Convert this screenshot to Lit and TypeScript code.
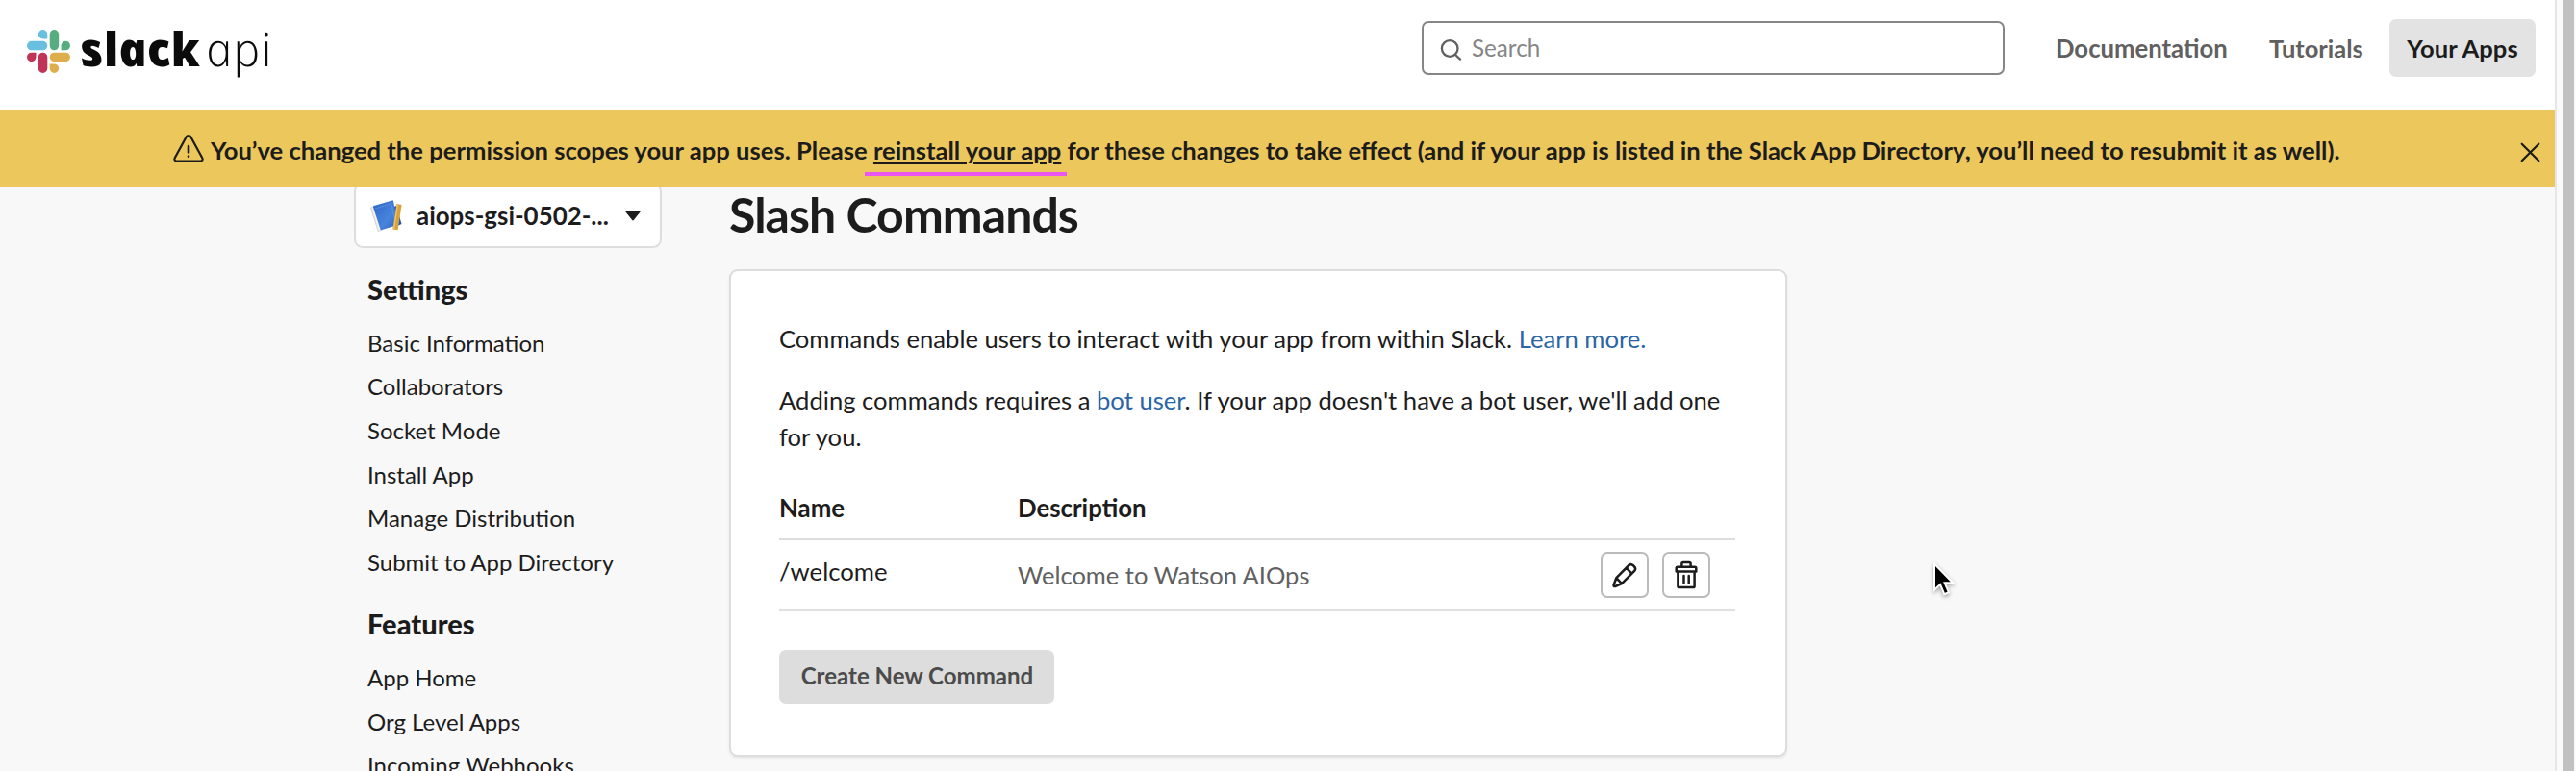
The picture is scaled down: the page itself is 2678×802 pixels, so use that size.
import { LitElement, html, css } from "lit";
import { customElement } from "lit/decorators.js";

const SECTIONS = [
  {
    title: "Settings",
    items: ["Basic Information", "Collaborators", "Socket Mode", "Install App", "Manage Distribution", "Submit to App Directory"],
  },
  { title: "Features", items: ["App Home", "Org Level Apps", "Incoming Webhooks"] },
];

@customElement("api-header")
class ApiHeader extends LitElement {
  static styles = css`
    :host { display: flex; align-items: center; height: 100px; padding: 0 20px 14px 28px; background: #fff; }
    .mark { width: 45px; height: 45px; margin-top: 7px; flex: none; }
    .word { display: flex; margin-left: 13px; width: 210px; font: italic 800 48.7px/100px "Open Sans", sans-serif; color: #0b0b0b; white-space: nowrap; }
    .slack { transform: skewX(12deg); transform-origin: 0 69px; width: 131px; letter-spacing: 0; }
    .api { transform: skewX(12deg); transform-origin: 0 69px; font-weight: 300; letter-spacing: 1.2px; }
    .search { box-sizing: border-box; display: flex; align-items: center; width: 606px; height: 56px; margin-left: auto; border: 2px solid #868686; border-radius: 7px; padding: 0 17px; gap: 10px; color: #868686; font-size: 24.2px; }
    .search svg { margin-top: 4px; }
    .search span { padding-bottom: 2px; }
    nav { display: flex; align-items: center; margin-left: 53px; font-weight: 700; color: #616061; white-space: nowrap; }
    .doc { font-size: 25.7px; width: 222px; }
    .tut { font-size: 25.5px; width: 125px; }
    .apps { box-sizing: border-box; width: 152px; height: 60px; line-height: 60px; text-align: center; border-radius: 7px; background: #e3e3e3; color: #1d1c1d; font-size: 25.6px; }
  `;
  render() {
    return html`
      <svg class="mark" viewBox="0 0 122.8 122.8">
        <path fill="#c03458" d="M25.8 77.6a12.9 12.9 0 1 1-12.9-12.9h12.9zM32.3 77.6a12.9 12.9 0 0 1 25.8 0v32.3a12.9 12.9 0 0 1-25.8 0z" />
        <path fill="#68bfe0" d="M45.2 25.8a12.9 12.9 0 1 1 12.9-12.9v12.9zM45.2 32.3a12.9 12.9 0 0 1 0 25.8H12.9a12.9 12.9 0 0 1 0-25.8z" />
        <path fill="#57ad7f" d="M97 45.2a12.9 12.9 0 1 1 12.9 12.9H97zM90.5 45.2a12.9 12.9 0 0 1-25.8 0V12.9a12.9 12.9 0 0 1 25.8 0z" />
        <path fill="#dfae4c" d="M77.6 97a12.9 12.9 0 1 1-12.9 12.9V97zM77.6 90.5a12.9 12.9 0 0 1 0-25.8h32.3a12.9 12.9 0 0 1 0 25.8z" />
      </svg>
      <div class="word"><span class="slack">slack</span><span class="api">api</span></div>
      <div class="search">
        <svg width="23" height="22" viewBox="0 0 23 22" fill="none" stroke="#616061" stroke-width="2.3" stroke-linecap="round">
          <circle cx="10.2" cy="9.5" r="8.3" /><path d="M16 16l5 4.6" />
        </svg>
        <span>Search</span>
      </div>
      <nav><span class="doc">Documentation</span><span class="tut">Tutorials</span><span class="apps">Your Apps</span></nav>
    `;
  }
}

@customElement("scope-banner")
class ScopeBanner extends LitElement {
  static styles = css`
    :host { display: flex; box-sizing: border-box; align-items: center; height: 80px; padding: 4px 15px 0 179px; background: #ecc75c; color: #1d1c1d; font-size: 25.6px; font-weight: 700; white-space: nowrap; }
    .warn { margin: 0 6px 2px 0; }
    .link { position: relative; text-decoration: underline; text-decoration-thickness: 2px; text-underline-offset: 3px; }
    .mark { position: absolute; left: -9px; right: -6px; top: 38px; height: 4px; background: #ea56f0; }
    .close { margin: 5px 0 0 auto; }
  `;
  render() {
    return html`
      <svg class="warn" width="34" height="32" viewBox="0 0 34 32" fill="none" stroke="#1d1c1d" stroke-width="2.2" stroke-linecap="round" stroke-linejoin="round">
        <path d="M14.6 3.4a2.8 2.8 0 0 1 4.8 0L31.4 25.5a2 2 0 0 1-1.8 3H4.4a2 2 0 0 1-1.8-3z" />
        <path stroke-width="2.6" d="M17 13v6.5M17 23.6v.2" />
      </svg>
      <div>You’ve changed the permission scopes your app uses. Please <span class="link">reinstall your app<i class="mark"></i></span> for these changes to take effect (and if your app is listed in the Slack App Directory, you’ll need to resubmit it as well).</div>
      <svg class="close" width="21" height="21" viewBox="0 0 21 21" stroke="#1d1c1d" stroke-width="2.2" stroke-linecap="round"><path d="M1.7 1.7l17.6 17.6M19.3 1.7L1.7 19.3" /></svg>
    `;
  }
}

@customElement("app-sidebar")
class AppSidebar extends LitElement {
  static styles = css`
    :host { display: block; width: 320px; color: #1d1c1d; }
    .select { box-sizing: border-box; display: flex; align-items: center; height: 68px; margin-top: -4px; padding: 0 20px 0 14px; border: 2px solid #ddd; border-radius: 9px; background: #fff; font-size: 25.9px; font-weight: 700; }
    .select span { margin-left: 13px; flex: 1; }
    .icon { margin-top: 2px; }
    .list { margin: 23px 0 0 14px; }
    .list + .list { margin-top: 22px; }
    h2 { margin: 0 0 12.8px; font-size: 29px; line-height: 40px; font-weight: 900; }
    .item { font-size: 24px; line-height: 45.6px; white-space: nowrap; }
  `;
  render() {
    return html`
      <div class="select">
        <svg class="icon" width="36" height="36" viewBox="0 0 36 36">
          <defs><linearGradient id="b" x1="0" y1="0" x2="1" y2="1"><stop offset="0" stop-color="#2f66c8" /><stop offset=".6" stop-color="#4784dc" /><stop offset="1" stop-color="#2c5fc0" /></linearGradient></defs>
          <path fill="#d9d9d9" d="M.8 9l4-2.2L11 31l-2 3.4z" /><path fill="#f3f3f3" stroke="#ccc" stroke-width=".5" d="M2 8.7l3-1.6 7.6 25.4-3 1.4z" />
          <path fill="#2454b4" d="M26 8l2-1 5.5 19-8.5 4z" />
          <path fill="url(#b)" d="M4 8.6q-.2-1 .8-1.5L23.7 1.4q1-.3 1.3.7l5.2 24.6-18.4 5.9z" />
          <path fill="none" stroke="#7ba8ea" stroke-width=".7" stroke-dasharray="1.4 1" d="M6.5 9.8L22.8 4.8l4.2 20" />
          <path fill="#d9a13c" d="M28.4 5l5.2.9-4 26.4-5.3-.8z" /><path stroke="#f1c86e" stroke-width="1.2" d="M29.4 5.6L25.6 31" />
        </svg>
        <span>aiops-gsi-0502-...</span>
        <svg width="16" height="11" viewBox="0 0 16 11"><path fill="#1d1c1d" stroke="#1d1c1d" stroke-width="1.4" stroke-linejoin="round" d="M1 1h14L8 9.8z" /></svg>
      </div>
      ${SECTIONS.map(
        (s) => html`<div class="list"><h2>${s.title}</h2>${s.items.map((i) => html`<div class="item">${i}</div>`)}</div>`
      )}
    `;
  }
}

@customElement("commands-panel")
class CommandsPanel extends LitElement {
  static styles = css`
    :host { display: block; width: 1100px; color: #1d1c1d; }
    h1 { margin: -1px 0 27px; font-size: 50px; line-height: 60px; font-weight: 700; letter-spacing: -0.95px; white-space: nowrap; }
    .card { box-sizing: border-box; height: 507px; padding: 51px 52px 0 50px; border: 2px solid #ddd; border-radius: 9px; background: #fff; box-shadow: 0 2px 3px rgba(0, 0, 0, 0.07); }
    p { margin: 0 0 26px; font-size: 25.62px; line-height: 38px; }
    a { color: #2a65a5; }
    .head, .row { display: grid; grid-template-columns: 248px 1fr auto; border-bottom: 2px solid #ddd; }
    .head { margin-top: 36px; padding-bottom: 13px; font-size: 25.8px; line-height: 38px; font-weight: 700; }
    .row { align-items: center; height: 72px; padding-right: 26px; border-color: #e0e0e0; }
    .name { font-size: 25.7px; padding-bottom: 8px; }
    .desc { font-size: 25.5px; color: #616061; }
    .acts { display: flex; gap: 14px; }
    .btn { box-sizing: border-box; display: flex; align-items: center; justify-content: center; width: 50px; height: 48px; border: 2px solid #bbb; border-radius: 7px; background: #fff; }
    .create { box-sizing: border-box; width: 286px; height: 56px; margin-top: 40px; padding-left: 1px; border-radius: 7px; background: #ddd; color: #4b4b4b; font-size: 24.05px; line-height: 54px; font-weight: 700; text-align: center; }
  `;
  render() {
    return html`
      <h1>Slash Commands</h1>
      <div class="card">
        <p>Commands enable users to interact with your app from within Slack. <a>Learn more.</a></p>
        <p>Adding commands requires a <a>bot user</a>. If your app doesn't have a bot user, we'll add one for you.</p>
        <div class="head"><span>Name</span><span>Description</span></div>
        <div class="row">
          <span class="name">/welcome</span>
          <span class="desc">Welcome to Watson AIOps</span>
          <div class="acts">
            <div class="btn">
              <svg width="26" height="27" viewBox="0 0 26 27" fill="none" stroke="#1d1c1d" stroke-width="2.5" stroke-linejoin="round" stroke-linecap="round">
                <path d="M4.3 16.2L17.4 3q2-2 4.6.3l.7.7q2.6 2.6.5 4.8L10 22.2 3.2 25q-2 .5-1.6-1.5zM14.7 5.8l5.8 5.8M4.3 16.2l5.7 6" />
              </svg>
            </div>
            <div class="btn">
              <svg width="24" height="30" viewBox="0 0 24 30" fill="none" stroke="#1d1c1d" stroke-width="2.5" stroke-linejoin="round" stroke-linecap="round">
                <path d="M7.4 6.4V3.6q0-1.6 1.6-1.6h6q1.6 0 1.6 1.6v2.8M1.7 11.5V8q0-1.3 1.3-1.3h18q1.3 0 1.3 1.3v3.5zM3.4 11.8v14.9q0 1.4 1.4 1.4h14.4q1.4 0 1.4-1.4V11.8M9.5 16v7.6M14.7 16v7.6" />
              </svg>
            </div>
          </div>
        </div>
        <div class="create">Create New Command</div>
      </div>
    `;
  }
}

@customElement("app-root")
class AppRoot extends LitElement {
  static styles = css`
    :host { position: relative; display: flex; height: 802px; overflow: hidden; background: #f8f8f8; font-family: Lato, sans-serif; }
    .page { width: 2656px; height: 802px; overflow: hidden; }
    .main { display: flex; gap: 70px; height: 608px; padding-left: 368px; overflow: hidden; }
    .edge { width: 2px; background: #e6e6e6; }
    .track { box-sizing: border-box; width: 20px; padding: 0 2px 0 6px; background: #fafafa; }
    .thumb { height: 100%; background: #c1c1c1; }
    .cursor { position: absolute; left: 2006px; top: 580px; filter: drop-shadow(0 2px 2px rgba(0, 0, 0, 0.35)); }
  `;
  render() {
    return html`
      <div class="page">
        <api-header></api-header>
        <scope-banner></scope-banner>
        <div class="main"><app-sidebar></app-sidebar><commands-panel></commands-panel></div>
      </div>
      <div class="edge"></div>
      <div class="track"><div class="thumb"></div></div>
      <svg class="cursor" width="32" height="44" viewBox="0 0 32 44">
        <path fill="#000" stroke="#fff" stroke-width="2" d="M5 6.5v27.2l6-5.8 4.3 10.3 4.6-2-4.3-10h8.6z" />
      </svg>
    `;
  }
}
